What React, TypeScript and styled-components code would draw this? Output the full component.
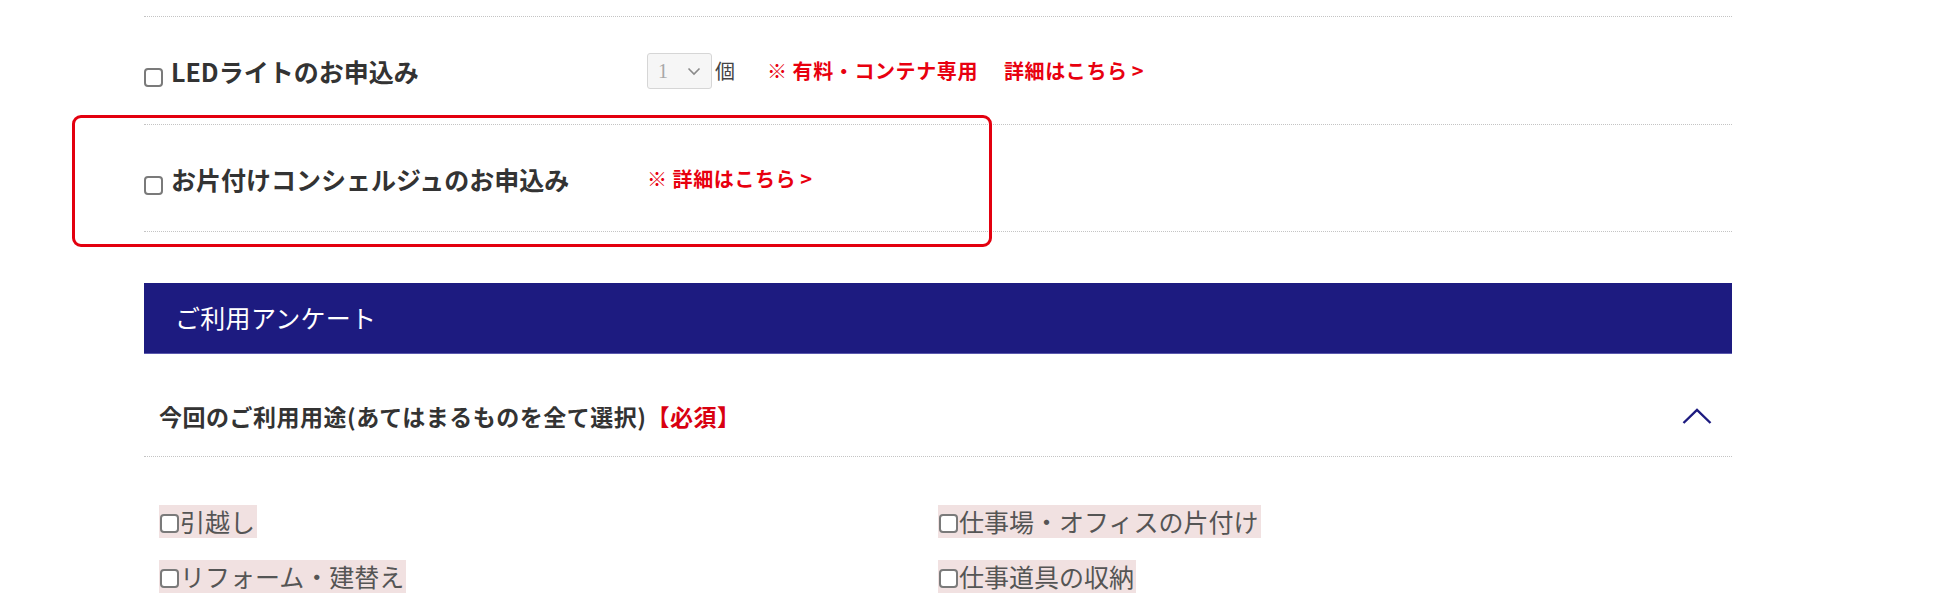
import React from "react";
import styled, { createGlobalStyle } from "styled-components";

const GlobalStyle = createGlobalStyle`
  html, body { margin: 0; padding: 0; background: #ffffff; }
  body {
    font-family: "Noto Sans CJK JP", "Noto Sans", sans-serif;
    color: #333333;
  }
`;

const Page = styled.div`
  width: 1588px;
  padding: 16px 0 0 144px;
`;

const OptionRow = styled.div<{ $last?: boolean }>`
  position: relative;
  display: flex;
  align-items: center;
  box-sizing: border-box;
  height: 108px;
  padding-top: 1px;
  border-top: 1px dotted #c4c4c4;
  ${(p) => (p.$last ? "border-bottom: 1px dotted #c4c4c4;" : "")}
`;

const LabelCell = styled.label`
  display: flex;
  align-items: center;
  width: 503px;
  flex: none;
`;

const Check = styled.input.attrs({ type: "checkbox" })<{ $size?: number }>`
  appearance: none;
  -webkit-appearance: none;
  box-sizing: border-box;
  width: ${(p) => p.$size ?? 19}px;
  height: ${(p) => p.$size ?? 19}px;
  margin: 0;
  flex: none;
  border: 2px solid #7a7a7a;
  border-radius: 4px;
  background: #ffffff;
  &:checked {
    background: #1d1b80;
    border-color: #1d1b80;
  }
`;

const RowCheck = styled(Check)`
  margin: 13px 8px 0 0;
`;

const OptionTitle = styled.span`
  font-size: 25px;
  font-weight: 700;
  line-height: 36px;
  color: #333333;
  white-space: nowrap;
`;

const SelectWrap = styled.span`
  position: relative;
  display: inline-flex;
  flex: none;
`;

const QtySelect = styled.select`
  appearance: none;
  -webkit-appearance: none;
  width: 65px;
  height: 36px;
  box-sizing: border-box;
  padding: 0 0 0 10px;
  border: 1px solid #d6d6d6;
  border-radius: 3px;
  background: #f6f6f6;
  color: #a8a8a8;
  font-family: "Liberation Serif", serif;
  font-size: 20px;
  opacity: 1;
`;

const SelectArrow = styled.svg`
  position: absolute;
  right: 11px;
  top: 14px;
  pointer-events: none;
`;

const Unit = styled.span`
  margin-left: 3px;
  font-size: 20px;
  line-height: 36px;
  color: #444444;
`;

const Note = styled.span<{ $gap?: number }>`
  margin-left: ${(p) => p.$gap ?? 0}px;
  font-size: 20px;
  font-weight: 700;
  line-height: 36px;
  letter-spacing: 0.6px;
  color: #e8000f;
  white-space: nowrap;
`;

const NoteMark = styled.span`
  font-weight: 400;
  margin-right: 5px;
`;

const Caret = styled.span`
  margin-left: 4px;
`;

const DetailLink = styled.a`
  margin-left: 26px;
  color: inherit;
  text-decoration: none;
`;

const Highlight = styled.div`
  position: absolute;
  left: -72px;
  top: -10px;
  width: 920px;
  height: 132px;
  box-sizing: border-box;
  border: 3px solid #e3000f;
  border-radius: 9px;
  pointer-events: none;
`;

const SectionBar = styled.div`
  margin-top: 51px;
  display: flex;
  align-items: center;
  box-sizing: border-box;
  height: 71px;
  padding: 0 0 2px 31px;
  background: #1d1b80;
  border-bottom: 1px solid #5a58ad;
  color: #ffffff;
  font-size: 25px;
  font-weight: 400;
  letter-spacing: 0.3px;
`;

const QuestionRow = styled.div`
  display: flex;
  align-items: center;
  justify-content: space-between;
  box-sizing: border-box;
  height: 103px;
  padding: 22px 20px 0 15px;
  border-bottom: 1px dotted #c4c4c4;
`;

const QuestionText = styled.span`
  font-size: 23px;
  font-weight: 700;
  line-height: 34px;
  letter-spacing: 0.5px;
  color: #333333;
`;

const Required = styled.span`
  color: #d90010;
`;

const Chevron = styled.svg`
  display: block;
  flex: none;
`;

const Choices = styled.div`
  display: grid;
  grid-template-columns: 779px 779px;
  row-gap: 22px;
  padding: 48px 15px 0;
`;

const Choice = styled.label`
  justify-self: start;
  display: inline-flex;
  align-items: center;
  height: 33px;
  padding-right: 2px;
  background: #f1e1e1;
  font-size: 25px;
  line-height: 33px;
  color: #555555;
  white-space: nowrap;
`;

const ChoiceCheck = styled(Check)`
  margin: 3px 1px 0 1px;
`;

const choices = [
  "引越し",
  "仕事場・オフィスの片付け",
  "リフォーム・建替え",
  "仕事道具の収納",
];

export default function App() {
  return (
    <>
      <GlobalStyle />
      <Page>
        <OptionRow>
          <LabelCell>
            <RowCheck />
            <OptionTitle>LEDライトのお申込み</OptionTitle>
          </LabelCell>
          <SelectWrap>
            <QtySelect disabled defaultValue="1">
              <option value="1">1</option>
            </QtySelect>
            <SelectArrow width="14" height="9" viewBox="0 0 14 9">
              <polyline
                points="1.5,1.5 7,7 12.5,1.5"
                fill="none"
                stroke="#8a8a8a"
                strokeWidth="1.6"
              />
            </SelectArrow>
          </SelectWrap>
          <Unit>個</Unit>
          <Note $gap={32}>
            <NoteMark>※</NoteMark>有料・コンテナ専用
            <DetailLink href="#">
              詳細はこちら<Caret>&gt;</Caret>
            </DetailLink>
          </Note>
        </OptionRow>
        <OptionRow $last>
          <LabelCell>
            <RowCheck />
            <OptionTitle>お片付けコンシェルジュのお申込み</OptionTitle>
          </LabelCell>
          <Note>
            <NoteMark>※</NoteMark>詳細はこちら<Caret>&gt;</Caret>
          </Note>
          <Highlight />
        </OptionRow>

        <SectionBar>ご利用アンケート</SectionBar>

        <QuestionRow>
          <QuestionText>
            今回のご利用用途(あてはまるものを全て選択)<Required>【必須】</Required>
          </QuestionText>
          <Chevron width="30" height="18" viewBox="0 0 30 18">
            <polyline
              points="1.5,16 15,3 28.5,16"
              fill="none"
              stroke="#1d1b80"
              strokeWidth="2.4"
            />
          </Chevron>
        </QuestionRow>

        <Choices>
          {choices.map((c) => (
            <Choice key={c}>
              <ChoiceCheck $size={19} />
              {c}
            </Choice>
          ))}
        </Choices>
      </Page>
    </>
  );
}
